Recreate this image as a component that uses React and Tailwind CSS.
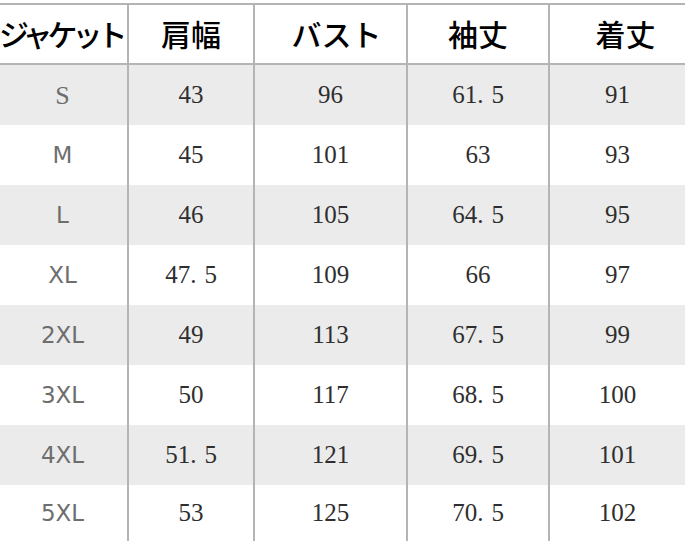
import React from "react";

const rows = [
  ["S", "43", "96", "61.5", "91"],
  ["M", "45", "101", "63", "93"],
  ["L", "46", "105", "64.5", "95"],
  ["XL", "47.5", "109", "66", "97"],
  ["2XL", "49", "113", "67.5", "99"],
  ["3XL", "50", "117", "68.5", "100"],
  ["4XL", "51.5", "121", "69.5", "101"],
  ["5XL", "53", "125", "70.5", "102"],
];

const cols = "grid grid-cols-[127px_126px_153px_142px_137px]";

function Num({ v }) {
  if (v.includes(".")) {
    const [a, b] = v.split(".");
    return (
      <span>
        {a}.<span className="ml-[8px]">{b}</span>
      </span>
    );
  }
  return <span>{v}</span>;
}

export default function App() {
  return (
    <div className="w-[685px] h-[548px] bg-white overflow-hidden pt-[3px]">
      <div
        className={`${cols} h-[62px] border-t-2 border-b-2 border-[#b4b4b4] text-black`}
        style={{ fontFamily: '"Noto Sans CJK JP", "Noto Sans", sans-serif' }}
      >
        <div className="flex items-center justify-start text-[30px] font-medium tracking-[-5px] whitespace-nowrap -ml-[1px] pb-[2px]">
          ジャケット
        </div>
        <div className="flex items-center justify-center border-l-2 border-[#b4b4b4] text-[30px] font-medium pb-[2px]">
          肩幅
        </div>
        <div className="flex items-center justify-center border-l-2 border-[#b4b4b4] text-[30px] font-medium pl-[12px] pb-[2px]">
          バスト
        </div>
        <div className="flex items-center justify-center border-l-2 border-[#b4b4b4] text-[30px] font-medium pb-[2px]">
          袖丈
        </div>
        <div className="flex items-center justify-center border-l-2 border-[#b4b4b4] text-[30px] font-medium pl-[16px] pb-[2px]">
          着丈
        </div>
      </div>
      {rows.map((r, i) => (
        <div
          key={r[0]}
          className={`${cols} ${i === rows.length - 1 ? "h-[56px]" : "h-[60px]"} ${
            i % 2 === 0 ? "bg-[#ebebeb]" : "bg-white"
          }`}
        >
          <div
            className="flex items-center justify-center text-[#6e6e6e] pr-[2px]"
            style={{
              fontFamily:
                r[0] === "S"
                  ? '"Liberation Serif", serif'
                  : '"DejaVu Sans", sans-serif',
              fontSize: r[0] === "S" ? "26px" : "23px",
            }}
          >
            {r[0]}
          </div>
          {r.slice(1).map((v, j) => (
            <div
              key={j}
              className="flex items-center justify-center border-l-2 border-[#b4b4b4] text-[25px] text-[#2e2e2e]"
              style={{ fontFamily: '"Liberation Serif", serif' }}
            >
              <Num v={v} />
            </div>
          ))}
        </div>
      ))}
    </div>
  );
}
